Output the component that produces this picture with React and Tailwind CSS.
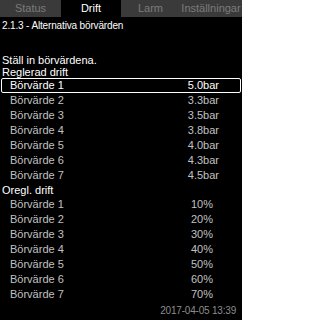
import React from "react";

const bar = [
  ["Börvärde 1", "5.0bar"],
  ["Börvärde 2", "3.3bar"],
  ["Börvärde 3", "3.5bar"],
  ["Börvärde 4", "3.8bar"],
  ["Börvärde 5", "4.0bar"],
  ["Börvärde 6", "4.3bar"],
  ["Börvärde 7", "4.5bar"],
];
const pct = [
  ["Börvärde 1", "10%"],
  ["Börvärde 2", "20%"],
  ["Börvärde 3", "30%"],
  ["Börvärde 4", "40%"],
  ["Börvärde 5", "50%"],
  ["Börvärde 6", "60%"],
  ["Börvärde 7", "70%"],
];

export default function App() {
  return (
    <div
      className="w-[242px] h-[320px] bg-black text-white overflow-hidden flex flex-col"
      style={{ fontFamily: '"Liberation Sans", Arial, sans-serif' }}
    >
      <div className="flex h-[17px] text-[11px] leading-[17px] shrink-0">
        <div className="w-[61px] bg-[#3a3a3a] text-[#7a7a7a] text-center">Status</div>
        <div className="w-[60px] bg-black text-white text-center">Drift</div>
        <div className="w-[59px] bg-[#3a3a3a] text-[#7a7a7a] text-center">Larm</div>
        <div className="flex-1 bg-[#3a3a3a] text-[#7a7a7a] text-center whitespace-nowrap overflow-hidden">Inställningar</div>
      </div>
      <div className="h-[15px] leading-[15px] mt-[1px] pl-[2px] text-[10px] tracking-[-0.15px] whitespace-nowrap">
        2.1.3 - Alternativa börvärden
      </div>
      <div className="h-[12px] leading-[12px] mt-[21px] pl-[2px] text-[11px]">Ställ in börvärdena.</div>
      <div className="h-[12px] leading-[12px] pl-[2px] text-[11px]">Reglerad drift</div>
      <div className="flex flex-col text-[11px]">
        {bar.map(([l, v], i) => (
          <div
            key={l}
            className={
              i === 0
                ? "h-[15px] mx-[1px] border border-white rounded-[2px] flex items-center justify-between pl-[8px] pr-[21px] text-white"
                : "h-[15px] flex items-center justify-between pl-[10px] pr-[23px] text-[#c0c0c0]"
            }
          >
            <span>{l}</span>
            <span>{v}</span>
          </div>
        ))}
      </div>
      <div className="h-[14px] leading-[14px] pl-[2px] text-[11px]">Oregl. drift</div>
      <div className="flex flex-col text-[11px]">
        {pct.map(([l, v]) => (
          <div key={l} className="h-[15px] flex items-center justify-between pl-[10px] pr-[29px] text-[#c0c0c0]">
            <span>{l}</span>
            <span>{v}</span>
          </div>
        ))}
      </div>
      <div className="h-[14px] mt-[2px] leading-[14px] text-right pr-[6px] text-[10px] tracking-[-0.2px] text-[#8c8c8c]">
        2017-04-05 13:39
      </div>
    </div>
  );
}
